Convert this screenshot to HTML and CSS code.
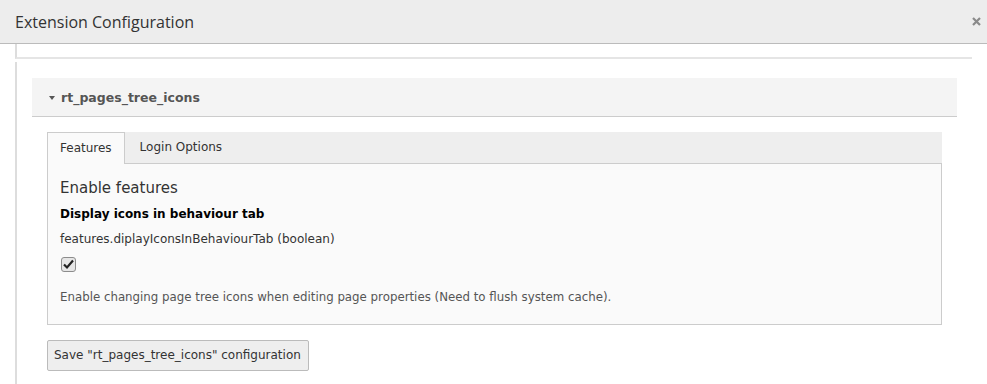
FILE: index.html
```html
<!DOCTYPE html>
<html>
<head>
<meta charset="utf-8">
<link rel="stylesheet" href="styles.css">
</head>
<body>
<div class="modal-header">
  <div class="modal-title">Extension Configuration</div>
  <svg class="close" width="9" height="9" viewBox="0 0 9 9"><path d="M1 1 L8 8 M8 1 L1 8" stroke="#8a8a8a" stroke-width="2.2"/></svg>
</div>
<div class="modal-body">
  <div class="prev"></div>
  <div class="item">
    <div class="panel-heading"><span class="caret"></span>rt_pages_tree_icons</div>
    <div class="panel-body">
      <div class="tabs">
        <div class="tab active">Features</div>
        <div class="tab">Login Options</div>
      </div>
      <div class="tab-content">
        <div class="h">Enable features</div>
        <div class="label">Display icons in behaviour tab</div>
        <div class="key">features.diplayIconsInBehaviourTab (boolean)</div>
        <div class="check">
          <svg width="15" height="15" viewBox="0 0 15 15">
            <rect x="0.5" y="0.5" width="14" height="14" rx="2.5" fill="#e6e6e6" stroke="#8c8c8c"/>
            <path d="M3 7.5 L6 10.5 L12 3.5" fill="none" stroke="#222" stroke-width="2.2"/>
          </svg>
        </div>
        <div class="desc">Enable changing page tree icons when editing page properties (Need to flush system cache).</div>
      </div>
      <div class="btn">Save "rt_pages_tree_icons" configuration</div>
    </div>
  </div>
</div>
</body>
</html>
```
FILE: styles.css
```css
html, body { margin: 0; padding: 0; background: #fff; }
body { font-family: "DejaVu Sans", Verdana, sans-serif; font-size: 12px; color: #333; overflow: hidden; height: 384px; }
.modal-header {
  height: 43px; border-bottom: 1px solid #bbb; background: #ededed;
  display: flex; align-items: center; justify-content: space-between;
  padding: 0 6px 0 15px;
}
.modal-title { font-family: "Open Sans", sans-serif; font-size: 16px; color: #333; }
.close { display: block; margin-top: 0; }
.modal-body { padding-left: 15px; }
.prev { height: 13px; margin-right: 15px; border-left: 2px solid #ddd; border-bottom: 2px solid #e5e5e5; }
.item { margin-top: 3px; border-left: 2px solid #ddd; padding: 16px 30px 0 15px; height: 400px; }
.panel-heading {
  height: 38px; border-bottom: 1px solid #ccc; background: #f4f4f4;
  display: flex; align-items: center; padding-left: 17px;
  font-weight: bold; font-size: 12.5px; color: #555;
}
.caret { width: 0; height: 0; border-left: 3px solid transparent; border-right: 3px solid transparent; border-top: 4px solid #555; margin-right: 6px; margin-top: 1px; }
.panel-body { padding: 15px; }
.tabs { display: flex; height: 31px; background: #eee; border-bottom: 1px solid #ccc; }
.tab { padding: 0 15px; line-height: 31px; color: #333; }
.active { padding: 0 12px; border: 1px solid #ccc; border-bottom: none; background: #fafafa; height: 31px; line-height: 30px; margin-bottom: -1px; }
.tab-content { background: #fafafa; border: 1px solid #ccc; border-top: none; padding: 14px 12px 19px; }
.h { font-size: 15px; line-height: 20px; color: #333; }
.label { font-weight: bold; color: #000; line-height: 16px; margin-top: 8px; }
.key { line-height: 16px; margin-top: 9px; color: #333; }
.check { margin-top: 10px; height: 15px; padding-left: 1px; }
.check svg { display: block; }
.desc { margin-top: 17px; line-height: 16px; color: #555; font-size: 11.8px; }
.btn {
  display: inline-block; margin-top: 15px; height: 29px; line-height: 29px;
  padding: 0 7px 0 6px; border: 1px solid #bbb; background: #eee; border-radius: 2px; color: #333;
}
```
